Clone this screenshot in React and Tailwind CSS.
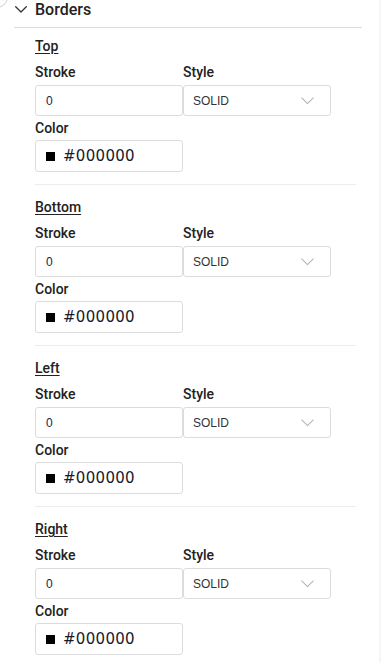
const sides = ["Top", "Bottom", "Left", "Right"];

function Chevron({ className, color = "#333", width = 12, height = 7, strokeWidth = 1.3 }) {
  return (
    <svg className={className} width={width} height={height} viewBox="0 0 12 7" fill="none">
      <path d="M0.7 0.7 L6 6 L11.3 0.7" stroke={color} strokeWidth={strokeWidth} strokeLinecap="round" strokeLinejoin="round" />
    </svg>
  );
}

function BorderSide({ name, first }) {
  return (
    <div className={`border-b border-[#ececec] pb-[12px] ${first ? "pt-[10px]" : "pt-[14px]"}`}>
      <div className="text-[14px] leading-[16px] font-medium text-[#222] underline underline-offset-[2px] decoration-[1px]">
        {name}
      </div>

      <div className="flex mt-[10px]">
        <div className="w-[148px]">
          <div className="text-[14px] leading-[16px] font-medium text-[#222] mb-[5px]">Stroke</div>
          <div className="h-[31px] border border-[#dcdcdc] rounded-[3px] flex items-center pl-[10px] text-[12px] text-[#22224a] font-['Liberation_Sans',sans-serif]">
            0
          </div>
        </div>
        <div className="w-[148px]">
          <div className="text-[14px] leading-[16px] font-medium text-[#222] mb-[5px]">Style</div>
          <div className="h-[31px] border border-[#dcdcdc] rounded-[3px] flex items-center justify-between pl-[9px] pr-[16px] text-[12px] text-[#333] font-['Liberation_Sans',sans-serif]">
            <span>SOLID</span>
            <Chevron color="#b5b5b5" width={13} height={8} strokeWidth={1} />
          </div>
        </div>
      </div>

      <div className="mt-[4px] text-[14px] leading-[16px] font-medium text-[#222]">Color</div>
      <div className="mt-[4px] w-[148px] h-[32px] border border-[#dcdcdc] rounded-[3px] flex items-center pl-[10px]">
        <span className="w-[9px] h-[9px] bg-black" />
        <span className="ml-[8px] text-[15px] leading-[18px] tracking-[0.3px] text-[#1a1a2a] font-['DejaVu_Sans',sans-serif]">
          #000000
        </span>
      </div>
    </div>
  );
}

export default function App() {
  return (
    <div className="relative w-[381px] h-[663px] overflow-hidden bg-white font-['Roboto',sans-serif]">
      {/* clipped round element in the corner */}
      <div className="absolute -left-[14px] -top-[14px] w-[22px] h-[22px] rounded-full border border-[#cfcfcf]" />
      <div className="absolute right-0 top-0 w-[2px] h-full bg-[#f6f6f6]" />

      {/* Header */}
      <div className="ml-[14px] w-[348px] h-[28px] border-b border-[#dcdcdc]">
        <div className="flex items-center h-[19px]">
          <Chevron className="ml-[1px]" />
          <span className="ml-[8px] text-[16px] leading-[19px] font-medium text-[#222]">Borders</span>
        </div>
      </div>

      <div className="pl-[35px] w-[356px]">
        {sides.map((s, i) => (
          <BorderSide key={s} name={s} first={i === 0} />
        ))}
      </div>
    </div>
  );
}
